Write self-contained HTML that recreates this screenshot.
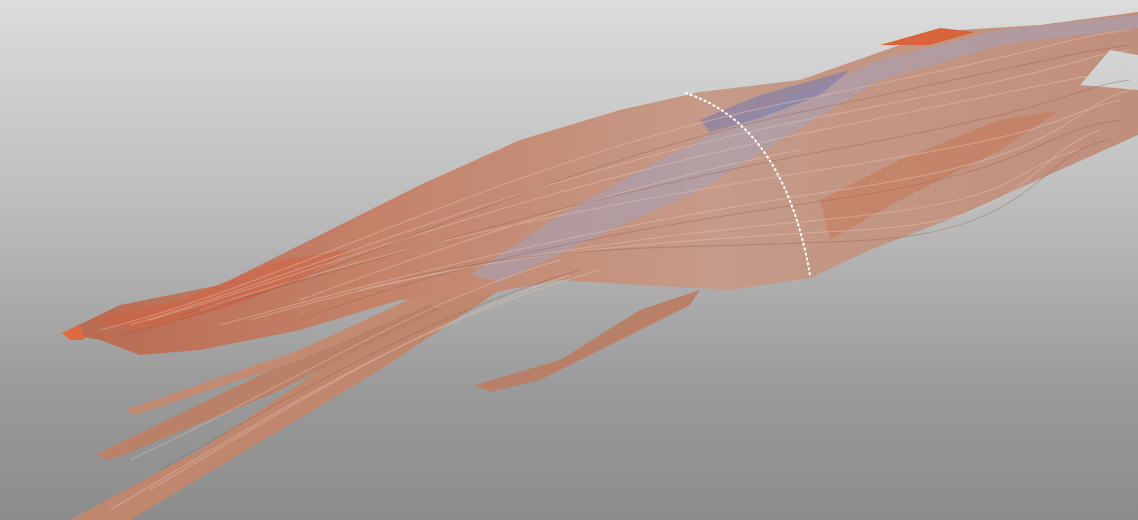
<!DOCTYPE html>
<html><head><meta charset="utf-8"><style>
html,body{margin:0;padding:0;width:1138px;height:520px;overflow:hidden}
body{background:linear-gradient(#dcdcdc 0%,#bcbcbc 40%,#9a9a9a 75%,#8c8c8c 100%)}
svg{display:block}
</style></head><body>
<svg width="1138" height="520" viewBox="0 0 1138 520" xmlns="http://www.w3.org/2000/svg">
<defs>
<linearGradient id="g1" x1="0" y1="0" x2="1" y2="0">
<stop offset="0" stop-color="#b86a50"/><stop offset="0.3" stop-color="#c4836a"/>
<stop offset="0.6" stop-color="#c59a88"/><stop offset="1" stop-color="#c08f7c"/></linearGradient>
</defs>
<path d="M70,520 L200,450 L380,330 L470,280 L500,290 L380,370 L230,460 L130,520Z" fill="#c0876f"/>
<path d="M95,455 L250,380 L420,300 L440,310 L270,395 L110,460Z" fill="#bb8068"/>
<path d="M125,410 L300,350 L430,290 L440,300 L300,360 L135,415Z" fill="#c38a72"/>
<path d="M475,385 L560,360 L640,310 L700,290 L690,305 L620,340 L540,380 L490,392Z" fill="#b98069"/>
<path d="M62,333 L120,305 L220,285 L330,230 L420,185 L520,140 L620,110 L700,92 L800,80 L900,45 L960,30 L1040,25 L1138,12 L1138,55 L1110,50 L1080,85 L1138,90 L1138,135 L1060,170 L960,215 L870,250 L810,278 L730,290 L640,285 L560,280 L480,295 L400,300 L300,330 L200,350 L140,355 L100,340Z" fill="url(#g1)"/>
<path d="M470,275 L560,215 L660,160 L760,110 L880,60 L1000,30 L1138,15 L1138,28 L1000,45 L880,80 L780,140 L700,190 L600,235 L500,282Z" fill="#a4a2bc" opacity="0.55"/>
<path d="M700,120 L760,95 L850,70 L820,95 L760,118 L710,132Z" fill="#7a7cac" opacity="0.6"/>
<path d="M90,320 L180,300 L280,260 L350,250 L300,280 L220,310 L140,330Z" fill="#d46040" opacity="0.5"/>
<path d="M880,45 L940,28 L975,32 L930,45Z" fill="#d8643c"/>
<path d="M820,200 L900,160 L1000,120 L1060,110 L1000,150 L900,200 L830,240Z" fill="#c8704e" opacity="0.45"/>
<path d="M62,333 L80,325 L85,340 L70,340Z" fill="#e06a40"/>
<g stroke="#e8c8b8" stroke-width="1" opacity="0.45" fill="none">
<path d="M100,330 C300,280 500,160 800,100 S1050,40 1130,30"/>
<path d="M150,320 C320,270 520,190 820,130 S1060,80 1130,70"/>
<path d="M200,310 C380,250 560,210 820,170 S1040,120 1120,100"/>
<path d="M250,320 C420,270 600,240 820,220 S1000,170 1080,150"/>
<path d="M300,300 C460,240 640,180 800,150"/>
<path d="M130,325 C330,265 540,170 830,115 S1060,60 1130,50"/>
<path d="M220,325 C400,275 600,225 840,190 S1060,110 1130,90"/>
<path d="M360,290 C520,250 680,240 860,230 S1020,160 1100,130"/>
<path d="M130,460 C300,380 420,300 560,260"/>
<path d="M110,510 C280,410 420,320 600,270"/>
<path d="M150,490 C300,400 430,320 570,275"/>
</g>
<g stroke="#8a5a48" stroke-width="1" opacity="0.35" fill="none">
<path d="M120,335 C320,290 520,170 810,110 S1060,55 1130,45"/>
<path d="M300,320 C460,260 620,230 830,200 S1040,130 1120,120"/>
<path d="M180,315 C380,260 560,200 830,150 S1060,90 1130,80"/>
<path d="M400,280 C560,240 700,250 870,240 S1040,150 1110,140"/>
<path d="M160,470 C300,390 440,310 580,270"/>
</g>
<path d="M685,93 C740,110 790,160 810,275" stroke="#ffffff" stroke-width="2" stroke-dasharray="3,2" fill="none"/>
</svg>
</body></html>
